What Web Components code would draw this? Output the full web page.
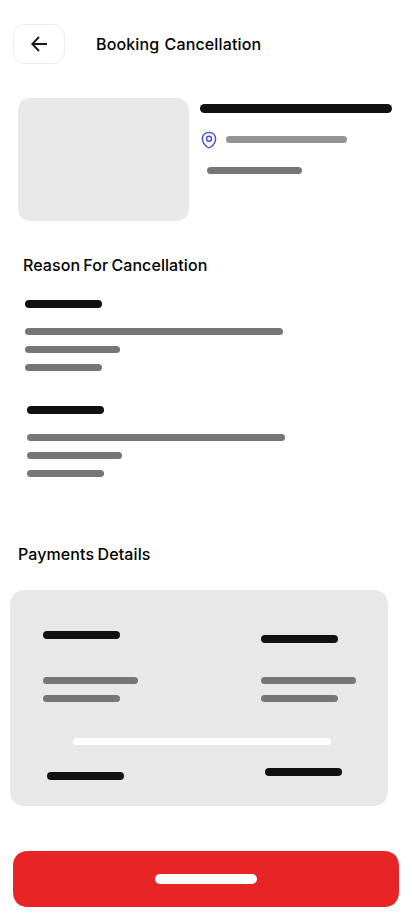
<!DOCTYPE html>
<html lang="en"><head><meta charset="utf-8"><title>Booking Cancellation</title>
<style>
html,body{margin:0;background:#fff}
body{width:412px;height:917px;overflow:hidden;font-family:Inter,"Liberation Sans",sans-serif;color:#000}
</style></head><body>
<cancel-page></cancel-page>
<script>
function define(name, html, setup){
  const t=document.createElement('template');t.innerHTML=html;
  customElements.define(name,class extends HTMLElement{
    constructor(){super();this.attachShadow({mode:'open'}).append(t.content.cloneNode(true));}
    connectedCallback(){if(setup)setup(this);}
  });
}
define('ui-bar',`<style>
:host{display:block;flex:none;height:7px;border-radius:5px;background:#767676}
:host([tone=dark]){height:8px;background:#111}
:host([tone=light]){background:#939393}
:host([tone=white]){background:#fff}
</style>`,el=>{
  el.style.width=el.getAttribute('w')+'px';
  if(el.hasAttribute('h'))el.style.height=el.getAttribute('h')+'px';
});
define('ui-title',`<style>
:host{display:block;font-size:16px;line-height:22px;font-weight:500;white-space:nowrap}
</style><slot></slot>`);
define('back-button',`<style>
:host{display:flex;align-items:center;justify-content:center;box-sizing:border-box;width:52px;height:40px;border:1px solid #ededed;border-radius:12px}
</style><svg width="18" height="18" viewBox="0 0 18 18" fill="none" stroke="#1a181b" stroke-width="1.9"><path d="M17 9H2.500M9 2 2.300 9 9 16"/></svg>`);
define('pin-icon',`<style>:host{display:block;width:16px;height:18px}svg{display:block}</style>
<svg width="16" height="18" viewBox="0 0 16 18" fill="none" stroke="#4c4ddc" stroke-width="1.450"><path d="M8 1.400C4 1.400 1.400 4 1.400 7.700c0 3.500 2.200 6.300 4.800 8.300 1.100.8 2.500.8 3.600 0 2.600-2 4.800-4.800 4.800-8.300C14.600 4 12 1.400 8 1.400Z"/><circle cx="8" cy="7.700" r="2.500"/></svg>`);
define('page-header',`<style>
:host{display:flex;align-items:center;gap:31px;padding:24px 13px 0}
ui-title{letter-spacing:.14px;word-spacing:.8px}
</style><back-button></back-button><ui-title><slot></slot></ui-title>`);
define('booking-summary',`<style>
:host{display:flex;gap:11px;padding:34px 18px 0}
.photo{width:171px;height:123px;border-radius:14px;corner-shape:superellipse(1.25);background:#e8e8e8}
.info{padding-top:6px}
.place{display:flex;align-items:flex-start;gap:9px;padding:18px 0 0 1px}
.place ui-bar{margin-top:5px}
.date{margin:18px 0 0 7px}
</style><div class="photo"></div><div class="info"><ui-bar tone="dark" w="192" h="9"></ui-bar>
<div class="place"><pin-icon></pin-icon><ui-bar tone="light" w="121"></ui-bar></div><ui-bar class="date" w="95"></ui-bar></div>`);
define('reason-block',`<style>
:host{display:flex;flex-direction:column;gap:11px}
ui-bar[tone]{margin-bottom:9px}
</style><ui-bar tone="dark" w="77"></ui-bar><ui-bar w="258"></ui-bar><ui-bar w="95"></ui-bar><ui-bar w="77"></ui-bar>`);
define('payment-column',`<style>
:host{display:flex;flex-direction:column;gap:11px}
</style><slot></slot><ui-bar w="95"></ui-bar><ui-bar w="77"></ui-bar>`);
define('payment-card',`<style>
:host{display:block;box-sizing:border-box;width:378px;height:216px;padding:41px 32px 0 33px;background:#e8e8e8;border-radius:16px;corner-shape:superellipse(1.25)}
.row{display:flex;justify-content:space-between;align-items:flex-end}
.left{margin-bottom:27px}.right{margin-top:4px;margin-bottom:23px}
.rule{margin:36px 0 0 30px}
.total{align-items:flex-start;padding:23px 14px 0 4px}
.total ui-bar:first-child{margin-top:4px}
</style><div class="row"><payment-column><ui-bar class="left" tone="dark" w="77"></ui-bar></payment-column><payment-column><ui-bar class="right" tone="dark" w="77"></ui-bar></payment-column></div>
<ui-bar class="rule" tone="white" w="258"></ui-bar>
<div class="row total"><ui-bar tone="dark" w="77"></ui-bar><ui-bar tone="dark" w="77"></ui-bar></div>`);
define('cancel-button',`<style>
:host{display:flex;align-items:center;justify-content:center;height:56px;border-radius:16px;corner-shape:superellipse(1.25);background:#e82525}
</style><slot></slot>`);
define('cancel-page',`<style>
:host{display:block;height:917px;background:#fff}
.reason{margin:33px 0 0 23px;letter-spacing:.08px;word-spacing:-1.2px}
.first{margin:24px 0 0 25px}
.second{margin:35px 0 0 27px}
.payments{margin:66px 0 0 18px;letter-spacing:.1px;word-spacing:-1px}
payment-card{margin:25px 0 0 10px}
cancel-button{margin:45px 13px 0}
</style><page-header>Booking Cancellation</page-header><booking-summary></booking-summary>
<ui-title class="reason">Reason For Cancellation</ui-title>
<reason-block class="first"></reason-block><reason-block class="second"></reason-block>
<ui-title class="payments">Payments Details</ui-title>
<payment-card></payment-card>
<cancel-button><ui-bar tone="white" w="102" h="10"></ui-bar></cancel-button>`);
</script></body></html>
